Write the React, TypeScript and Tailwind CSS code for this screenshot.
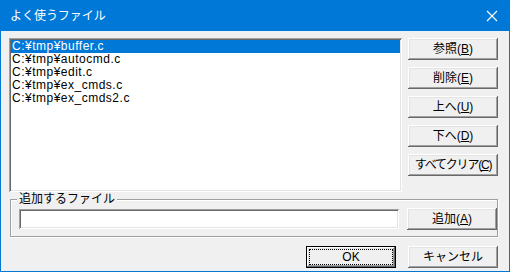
const files = [
  'C:¥tmp¥buffer.c',
  'C:¥tmp¥autocmd.c',
  'C:¥tmp¥edit.c',
  'C:¥tmp¥ex_cmds.c',
  'C:¥tmp¥ex_cmds2.c',
];

const raised =
  'shadow-[inset_-1px_-1px_#696969,inset_1px_1px_#ffffff,inset_-2px_-2px_#a0a0a0,inset_2px_2px_#e3e3e3]';
const sunken =
  'shadow-[inset_1px_1px_#a0a0a0,inset_-1px_-1px_#ffffff,inset_2px_2px_#696969,inset_-2px_-2px_#e3e3e3]';

function Btn({ label, hot, className = '' }: { label: string; hot: string; className?: string }) {
  return (
    <button
      className={`h-[22px] w-[90px] bg-[#f0f0f0] text-black text-[12px] leading-none flex items-center justify-center ${raised} ${className}`}
    >
      <span>
        {label}(<u>{hot}</u>)
      </span>
    </button>
  );
}

export default function App() {
  return (
    <div
      className="w-[510px] h-[272px] bg-[#0078d7] flex flex-col px-px pb-px select-none"
      style={{ fontFamily: '"Liberation Sans", "Noto Sans CJK JP", sans-serif' }}
    >
      {/* タイトルバー */}
      <div className="h-[31px] flex items-center justify-between pl-[9px] pr-[10px] text-white text-[12px]">
        <span>よく使うファイル</span>
        <svg width="12" height="12" viewBox="0 0 12 12" className="mr-[1px]">
          <path d="M1 1 L11 11 M11 1 L1 11" stroke="#ffffff" strokeWidth="1.1" />
        </svg>
      </div>

      <div className="flex-1 bg-[#f0f0f0] flex flex-col pl-[8px] pr-[11px] pt-[7px]">
        <div className="flex">
          {/* リスト */}
          <div className={`w-[393px] h-[154px] bg-white p-[2px] ${sunken}`}>
            <div className="flex flex-col text-[12px] leading-[13px] tracking-[0.5px] text-black">
              {files.map((f, i) => (
                <div
                  key={f}
                  className={i === 0 ? 'bg-[#0078d7] text-white pl-[1px]' : 'pl-[1px]'}
                >
                  {f}
                </div>
              ))}
            </div>
          </div>

          <div className="ml-[6px] flex flex-col gap-[7px]">
            <Btn label="参照" hot="B" />
            <Btn label="削除" hot="E" />
            <Btn label="上へ" hot="U" />
            <Btn label="下へ" hot="D" />
            <Btn label="すべてクリア" hot="C" className="tracking-[-1.2px]" />
          </div>
        </div>

        {/* 追加するファイル */}
        <div className="relative mt-[7px] ml-[1px] h-[38px] border border-[#a0a0a0] shadow-[1px_1px_#ffffff,inset_1px_1px_#ffffff] flex items-center pl-[8px] pt-[2px]">
          <span className="absolute -top-[8px] left-[6px] px-[2px] bg-[#f0f0f0] text-[12px] leading-[14px] text-black">
            追加するファイル
          </span>
          <div className={`w-[381px] h-[20px] bg-white ${sunken}`} />
          <Btn label="追加" hot="A" className="ml-[8px]" />
        </div>

        <div className="flex justify-end gap-[12px] mt-[9px]">
          <button
            className={`h-[22px] w-[90px] bg-[#f0f0f0] text-black text-[12px] leading-none flex items-center justify-center border border-black p-[2px] ${raised}`}
          >
            <span className="w-full h-full border border-dotted border-black flex items-center justify-center">OK</span>
          </button>
          <button
            className={`h-[22px] w-[90px] bg-[#f0f0f0] text-black text-[12px] leading-none flex items-center justify-center ${raised}`}
          >
            キャンセル
          </button>
        </div>
      </div>
    </div>
  );
}
